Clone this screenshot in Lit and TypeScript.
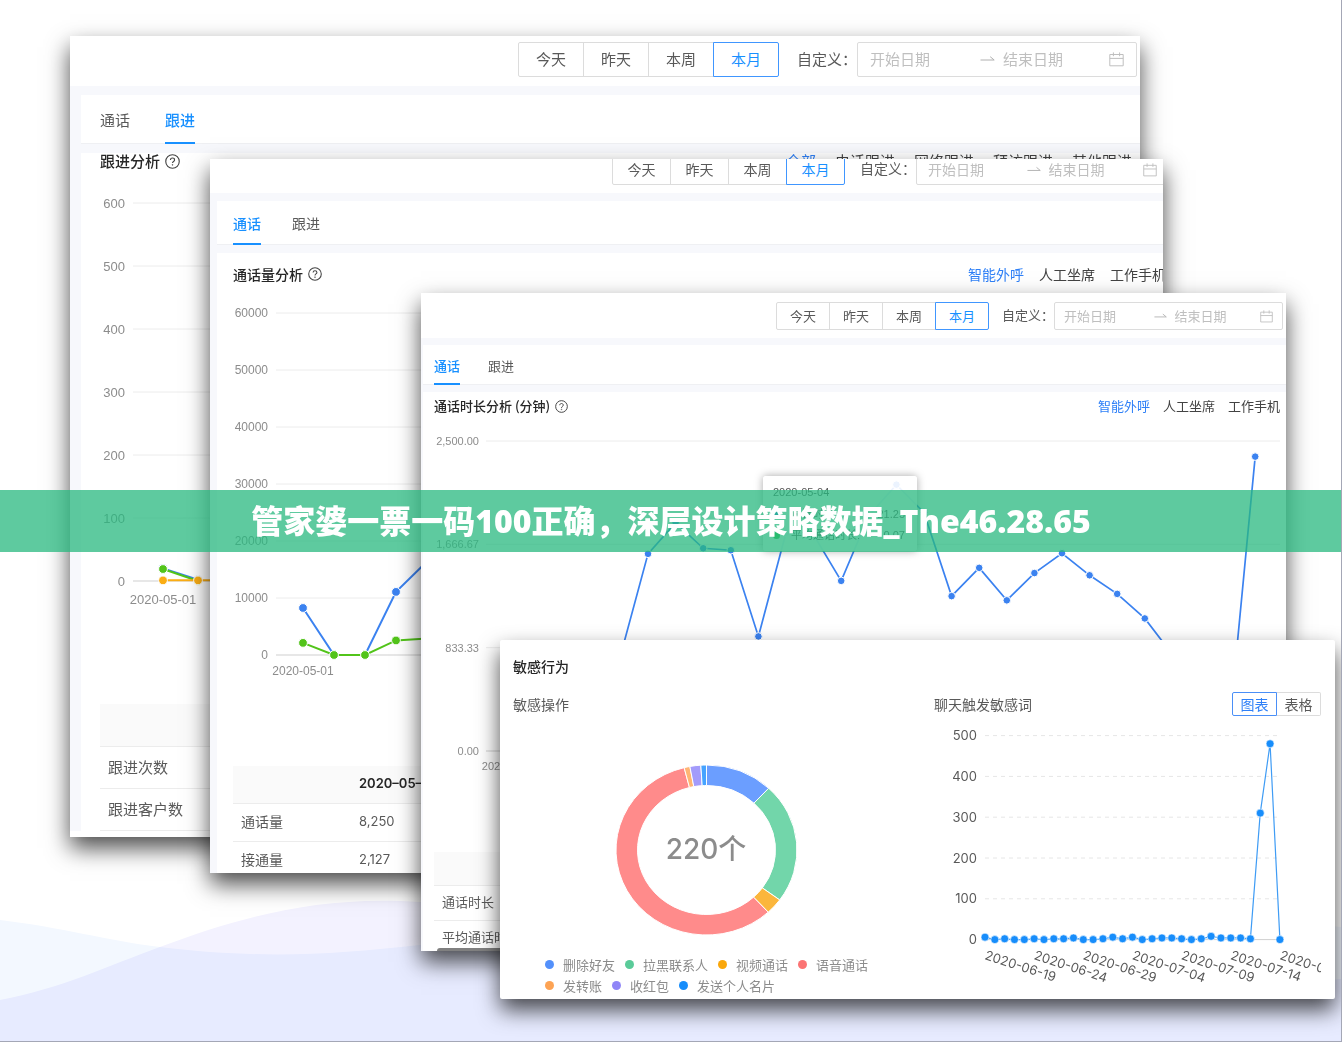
import { LitElement, html, svg, css } from "lit";
import { customElement } from "lit/decorators.js";
import { classMap } from "lit/directives/class-map.js";

interface Series {
  color: string;
  values: number[];
}

interface ChartSpec {
  width: number;
  height: number;
  plotLeft: number;
  plotRight: number;
  top: number;
  base: number;
  max: number;
  ticks: string[];
  font: number;
  labelRight: number;
  firstX: number;
  stepX: number;
  dateY: number;
  radius: number;
  series: Series[];
}

interface WindowSpec {
  id: string;
  tab: string;
  title: string;
  links: string[];
  chart: ChartSpec;
  head: string[];
  rows: string[][];
}

const WINDOWS: WindowSpec[] = [
  {
    id: "follow",
    tab: "跟进",
    title: "跟进分析",
    links: ["全部", "电话跟进", "网络跟进", "拜访跟进", "其他跟进"],
    chart: {
      width: 1059, height: 533, plotLeft: 52, plotRight: 1051, top: 32, base: 410, max: 600,
      ticks: ["0", "100", "200", "300", "400", "500", "600"],
      font: 13, labelRight: 44, firstX: 82, stepX: 35, dateY: 428, radius: 4,
      series: [
        { color: "#3b82f0", values: [20, 2] },
        { color: "#52c41a", values: [19, 0] },
        { color: "#faad14", values: [1, 1, 1] },
      ],
    },
    head: ["", ""],
    rows: [["跟进次数", ""], ["跟进客户数", ""]],
  },
  {
    id: "volume",
    tab: "通话",
    title: "通话量分析",
    links: ["智能外呼", "人工坐席", "工作手机"],
    chart: {
      width: 955, height: 469, plotLeft: 59, plotRight: 949, top: 16, base: 358, max: 60000,
      ticks: ["0", "10000", "20000", "30000", "40000", "50000", "60000"],
      font: 12, labelRight: 51, firstX: 86, stepX: 31, dateY: 374, radius: 4,
      series: [
        { color: "#3b82f0", values: [8250, 0, 0, 11070, 16400] },
        { color: "#52c41a", values: [2127, 0, 0, 2550, 2900] },
      ],
    },
    head: ["", "2020–05–01"],
    rows: [["通话量", "8,250"], ["接通量", "2,127"]],
  },
  {
    id: "duration",
    tab: "通话",
    title: "通话时长分析 (分钟)",
    links: ["智能外呼", "人工坐席", "工作手机"],
    chart: {
      width: 863, height: 430, plotLeft: 63, plotRight: 857, top: 19, base: 329, max: 2500,
      ticks: ["0.00", "833.33", "1,666.67", "2,500.00"],
      font: 11, labelRight: 56, firstX: 87, stepX: 27.6, dateY: 344, radius: 3.4,
      series: [
        {
          color: "#3b82f0",
          values: [
            620, 540, 0, 0, 766, 1590, 1841, 1635, 1619, 924, 1760, 1744, 1372, 1898, 2148, 1922,
            1249, 1477, 1215, 1435, 1595, 1417, 1267, 1069, 778, 410, 47, 2374,
          ],
        },
      ],
    },
    head: ["", ""],
    rows: [["通话时长", ""], ["平均通话时长", ""]],
  },
];

const SLICES = [
  { name: "删除好友", end: 43.4, fill: "#6b9eff", dot: "#5390fb" },
  { name: "拉黑联系人", end: 126, fill: "#72d6aa", dot: "#5acb99" },
  { name: "视频通话", end: 137, fill: "#fbb63c", dot: "#faa70b" },
  { name: "语音通话", end: 345.7, fill: "#ff8b8b", dot: "#fb7474" },
  { name: "发转账", end: 349.4, fill: "#ffb574", dot: "#fda354" },
  { name: "收红包", end: 356.4, fill: "#a39bfb", dot: "#9086f7" },
  { name: "发送个人名片", end: 360, fill: "#45a3ff", dot: "#178dfb" },
];

const WORD_HITS = [
  6, 0, 2, 0, 0, 2, 0, 2, 2, 4, 0, 0, 2, 6, 2, 6, 0, 2, 4, 4, 2, 0, 2, 8, 4, 4, 4, 2, 310, 480, 0,
];
const WORD_DATES = [
  "2020-06-19", "2020-06-24", "2020-06-29", "2020-07-04", "2020-07-09", "2020-07-14", "2020-07-19",
];

@customElement("app-root")
export class AppRoot extends LitElement {
  static styles = css`
    :host {
      display: block;
      font-family: "Noto Sans CJK SC", sans-serif;
      color: #595959;
    }
    * {
      box-sizing: border-box;
    }
    .stage {
      position: relative;
      min-height: 100vh;
      overflow: hidden;
      background: #fff;
      border-right: 1px solid #a4a7b6;
      border-bottom: 1px solid #a4a7b6;
    }
    .waves {
      position: absolute;
      left: 0;
      bottom: 0;
      width: 100%;
      height: 150px;
    }
    .wave {
      mix-blend-mode: multiply;
    }
    .window {
      position: absolute;
      overflow: hidden;
      background: #fff;
      box-shadow: 0 11px 22px rgba(0, 0, 0, 0.7);
      font-size: var(--font);
    }
    .follow {
      --font: 15px; --button-h: 35px; --button-w: 66px; --range: 280px; --gap: 18px;
      --bar: 50px; --band: 9px; --tabs: 49px; --gutter: 11px; --pad: 19px; --tab-gap: 35px;
      --head: 18px; --end: 8px; --link-gap: 19px; --icon: 15px; --row: 42px; --foot: 6px;
      --bleed: 0px; --num: 14px; --inset: 12px; --lift: 9px;
      left: 70px; right: 201px; top: 36px;
    }
    .volume {
      --font: 14px; --button-h: 31px; --button-w: 59px; --range: 253px; --gap: 15px;
      --bar: 34px; --band: 8px; --tabs: 44px; --gutter: 7px; --pad: 16px; --tab-gap: 31px;
      --head: 44px; --end: 6px; --link-gap: 15px; --icon: 14px; --row: 38px; --foot: -7px;
      --bleed: -9px; --num: 13px; --inset: 11px; --lift: 8px;
      left: 210px; right: 178px; top: 159px;
    }
    .duration {
      --font: 13px; --button-h: 28px; --button-w: 54px; --range: 229px; --gap: 13px;
      --bar: 45px; --band: 7px; --tabs: 40px; --gutter: 2px; --pad: 11px; --tab-gap: 28px;
      --head: 30px; --end: 6px; --link-gap: 13px; --icon: 13px; --row: 35px; --foot: -5px;
      --bleed: 0px; --num: 12px; --inset: 9px; --lift: 8px;
      left: 421px; right: 55px; top: 293px;
    }
    .frame {
      margin-right: var(--bleed);
      background: #f7f8fc;
    }
    .bar {
      display: flex;
      justify-content: flex-end;
      align-items: flex-end;
      height: var(--bar);
      padding: 0 3px var(--lift) 0;
      background: #fff;
    }
    button, input {
      font: inherit;
      color: inherit;
      margin: 0;
      padding: 0;
      background: none;
      border: 0;
      outline: 0;
      cursor: pointer;
    }
    .group {
      display: flex;
      margin-right: var(--gap);
    }
    .period {
      width: var(--button-w);
      height: var(--button-h);
      padding-bottom: 2px;
      border: 1px solid #dcdcdc;
      margin-right: -1px;
      background: #fff;
    }
    .period:first-child {
      border-radius: 2px 0 0 2px;
    }
    .period:last-child {
      border-radius: 0 2px 2px 0;
      margin-right: 0;
    }
    .period.on {
      position: relative;
      color: #1890ff;
      border-color: #4096ff;
    }
    .custom {
      height: var(--button-h);
      padding-bottom: 2px;
      line-height: calc(var(--button-h) - 2px);
      white-space: nowrap;
    }
    .range {
      display: flex;
      align-items: center;
      width: var(--range);
      height: var(--button-h);
      padding: 0 var(--inset);
      border: 1px solid #dcdcdc;
      border-radius: 2px;
    }
    .date {
      flex: 1;
      min-width: 0;
      width: 0;
      height: 100%;
      padding-bottom: 2px;
    }
    .date::placeholder {
      color: #bfbfbf;
      opacity: 1;
    }
    .arrow {
      width: var(--icon);
      height: var(--icon);
      margin: 0 8px 0 4px;
      fill: none;
      stroke: #b0b0b0;
    }
    .calendar {
      width: var(--icon);
      height: var(--icon);
      fill: none;
      stroke: #bfbfbf;
    }
    .tabs {
      display: flex;
      gap: var(--tab-gap);
      height: var(--tabs);
      margin: var(--band) 0 0 var(--gutter);
      padding-left: var(--pad);
      background: #fff;
      border-bottom: 1px solid #eff0f3;
    }
    .tab {
      height: var(--tabs);
      padding-top: 2px;
      border-bottom: 2px solid transparent;
    }
    .tab.on {
      font-weight: 500;
      color: #1890ff;
      border-color: #1890ff;
    }
    .content {
      margin: var(--band) 0 0 var(--gutter);
      background: #fff;
    }
    .head {
      display: flex;
      align-items: center;
      height: var(--head);
      padding: 0 var(--end) 2px var(--pad);
      line-height: 18px;
    }
    .title {
      margin: 0 5px 0 0;
      font-size: inherit;
      font-weight: 500;
      color: #262626;
    }
    .help {
      width: var(--font);
      height: var(--font);
      fill: none;
      stroke: #434343;
    }
    .links {
      display: flex;
      gap: var(--link-gap);
      margin-left: auto;
    }
    .link {
      color: #434343;
      text-decoration: none;
      white-space: nowrap;
    }
    .link.on {
      color: #2f80f7;
    }
    .chart {
      display: block;
      width: 100%;
      font-family: "Liberation Sans", sans-serif;
    }
    .chart text {
      fill: #8c8c8c;
    }
    .table {
      width: calc(100% - var(--pad));
      margin: 0 0 var(--foot) var(--pad);
      border-collapse: collapse;
      table-layout: fixed;
    }
    .table th, .table td {
      height: var(--row);
      padding: 0 8px 2px;
      text-align: left;
      font-weight: 400;
      border-bottom: 1px solid #ececec;
    }
    .table th:first-child {
      width: 118px;
    }
    .table thead th {
      height: 37px;
      background: #fafafa;
      font-family: Inter, sans-serif;
      font-size: var(--num);
      font-weight: 600;
      color: #262626;
    }
    .follow thead th {
      height: 42px;
    }
    .duration thead th {
      height: 33px;
    }
    .table td {
      font-family: Inter, sans-serif;
      font-size: var(--num);
    }
    .scrollbar {
      position: absolute;
      left: 16px;
      right: 16px;
      bottom: 0;
      height: 3px;
      border-radius: 3px 3px 0 0;
      background: #808080;
    }
    .tip {
      position: absolute;
      left: 342px;
      top: 183px;
      width: 154px;
      padding: 8px 12px 8px 10px;
      border-radius: 3px;
      background: rgba(255, 255, 255, 0.9);
      box-shadow: 0 0 8px rgba(0, 0, 0, 0.35);
      font: 11px "Liberation Sans", "Noto Sans CJK SC", sans-serif;
      line-height: 16px;
    }
    .tip-list {
      display: grid;
      gap: 5px;
      margin: 6px 0 0;
      padding: 0;
      list-style: none;
    }
    .tip-row {
      display: flex;
      align-items: center;
    }
    .tip-dot {
      width: 7px;
      height: 7px;
      margin-right: 11px;
      border-radius: 50%;
      background: #3b82f0;
    }
    .tip-dot.green {
      background: #29c441;
    }
    .tip-value {
      margin-left: auto;
    }
    .sensitive {
      left: 500px;
      right: 6px;
      top: 640px;
      padding: 14px 14px 3px 13px;
      font-size: 14px;
      line-height: 24px;
      border-radius: 2px;
    }
    .sensitive .title {
      margin-bottom: 14px;
    }
    .columns {
      display: grid;
      grid-template-columns: 421fr 387fr;
    }
    .sub {
      display: flex;
      justify-content: space-between;
      align-items: center;
      height: 24px;
    }
    .caption {
      margin: 0;
      font-size: 14px;
      font-weight: 400;
    }
    .switch {
      display: flex;
    }
    .mode {
      width: 44px;
      height: 24px;
      line-height: 20px;
      border: 1px solid #dcdcdc;
      border-left: 0;
      border-radius: 0 2px 2px 0;
    }
    .mode.on {
      width: 45px;
      color: #2f80f7;
      border: 1px solid #4a8ff7;
      border-radius: 2px 0 0 2px;
    }
    .figure {
      display: block;
      width: 100%;
      font-family: Inter, "Noto Sans CJK SC", sans-serif;
    }
    .total {
      font-size: 28px;
      font-weight: 500;
      fill: #8c8c8c;
    }
    .axis {
      font-size: 13px;
      fill: #595959;
    }
    .legend {
      display: flex;
      flex-wrap: wrap;
      column-gap: 10px;
      margin: 0;
      padding: 0 0 0 32px;
      list-style: none;
      font-size: 13px;
      line-height: 21px;
      color: #8c8c8c;
    }
    .key {
      display: flex;
      align-items: center;
      gap: 9px;
    }
    .dot {
      width: 9px;
      height: 9px;
      border-radius: 50%;
    }
    .banner {
      position: absolute;
      left: 0;
      right: -1px;
      top: 490px;
      margin: 0;
      height: 62px;
      line-height: 62px;
      text-align: center;
      white-space: nowrap;
      font-family: "Noto Sans", "Noto Sans CJK SC", sans-serif;
      font-size: 32px;
      font-weight: 900;
      color: #fff;
      background: rgba(40, 184, 127, 0.75);
    }
  `;

  private lineChart(c: ChartSpec) {
    const y = (v: number) => c.base - (v / c.max) * (c.base - c.top);
    const x = (i: number) => c.firstX + i * c.stepX;
    const gap = (c.base - c.top) / (c.ticks.length - 1);
    return html`<svg class="chart" viewBox="0 0 ${c.width} ${c.height}" font-size=${c.font}>
      ${c.ticks.map((t, i) => {
        const ty = c.base - i * gap;
        return svg`<line x1=${c.plotLeft} x2=${c.plotRight} y1=${ty} y2=${ty}
            stroke=${i ? "#ececec" : "#cfcfcf"}/>
          <text x=${c.labelRight} y=${ty + c.font * 0.36} text-anchor="end">${t}</text>`;
      })}
      <text x=${c.firstX} y=${c.dateY + c.font * 0.36} text-anchor="middle">2020-05-01</text>
      ${c.series.map(
        (s) => svg`<polyline fill="none" stroke=${s.color} stroke-width=${c.radius / 2}
            points=${s.values.map((v, i) => `${x(i)},${y(v)}`).join(" ")}/>
          ${s.values.map(
            (v, i) => svg`<circle cx=${x(i)} cy=${y(v)} r=${c.radius + 0.4}
              fill=${s.color} stroke="#fff"/>`,
          )}`,
      )}
    </svg>`;
  }

  private dataWindow(w: WindowSpec) {
    return html`<section class="window ${w.id}">
      <div class="frame">
        <div class="bar">
          <div class="group">
            ${["今天", "昨天", "本周", "本月"].map(
              (p) => html`<button class=${classMap({ period: true, on: p === "本月" })}>${p}</button>`,
            )}
          </div>
          <label class="custom" for="${w.id}-start">自定义：</label>
          <div class="range">
            <input class="date" id="${w.id}-start" placeholder="开始日期" />
            <svg class="arrow" viewBox="0 0 15 15"><path d="M0.5 8H14.2L10.2 4.7" /></svg>
            <input class="date" aria-label="结束日期" placeholder="结束日期" />
            <svg class="calendar" viewBox="0 0 15 15">
              <path d="M0.8 2.5H14.2V13.8H0.8ZM0.8 6.4H14.2M4.4 0.4V4.2M10.6 0.4V4.2" />
            </svg>
          </div>
        </div>
        <nav class="tabs">
          ${["通话", "跟进"].map(
            (t) => html`<button class=${classMap({ tab: true, on: t === w.tab })}>${t}</button>`,
          )}
        </nav>
        <div class="content">
          <div class="head">
            <h2 class="title">${w.title}</h2>
            <svg class="help" viewBox="0 0 16 16">
              <circle cx="8" cy="8" r="7.2" stroke-width="1.2" />
              <path d="M5.8 6.4C5.8 3.6 10.2 3.7 10.2 6.3C10.2 8 8 7.9 8 9.7" stroke-width="1.2" />
              <circle cx="8" cy="11.6" r="0.4" />
            </svg>
            <div class="links">
              ${w.links.map(
                (l, i) => html`<a class=${classMap({ link: true, on: i === 0 })} href="#">${l}</a>`,
              )}
            </div>
          </div>
          ${this.lineChart(w.chart)}
          <table class="table">
            <thead>
              <tr>${w.head.map((h) => html`<th scope="col">${h}</th>`)}</tr>
            </thead>
            <tbody>
              ${w.rows.map((r) => html`<tr><th scope="row">${r[0]}</th><td>${r[1]}</td></tr>`)}
            </tbody>
          </table>
        </div>
      </div>
      ${w.id === "duration"
        ? html`<div class="tip">
              2020-05-04
              <ul class="tip-list">
                <li class="tip-row"><span class="tip-dot"></span>通话时长:<span class="tip-value">21.25</span></li>
                <li class="tip-row"><span class="tip-dot green"></span>平均通话时长:<span class="tip-value">0.07</span></li>
              </ul>
            </div>
            <div class="scrollbar"></div>`
        : ""}
    </section>`;
  }

  private donut() {
    const at = (deg: number, rx: number, ry: number) => {
      const a = (deg * Math.PI) / 180;
      return `${193.5 + rx * Math.sin(a)} ${134 - ry * Math.cos(a)}`;
    };
    return html`<svg class="figure" viewBox="0 0 421 238">
      ${SLICES.map((s, i) => {
        const from = i ? SLICES[i - 1].end : 0;
        const to = Math.min(s.end, 359.99);
        const large = to - from > 180 ? 1 : 0;
        return svg`<path fill=${s.fill} stroke="#fff" d="M${at(from, 90.5, 85)}
          A90.5 85 0 ${large} 1 ${at(to, 90.5, 85)} L${at(to, 69, 64.5)}
          A69 64.5 0 ${large} 0 ${at(from, 69, 64.5)}Z"/>`;
      })}
      <text class="total" x="193" y="143" text-anchor="middle">220个</text>
    </svg>`;
  }

  private wordChart() {
    const x = (i: number) => 51 + i * 9.83;
    const y = (v: number) => 223.6 - v * 0.408;
    return html`<svg class="figure axis" viewBox="0 0 387 274">
      ${[0, 100, 200, 300, 400, 500].map(
        (v) => svg`<line x1="51" x2="346" y1=${y(v)} y2=${y(v)}
            stroke=${v ? "#e6e6e6" : "#d0d0d0"} stroke-dasharray=${v ? "4 4" : "none"}/>
          <text x="43" y=${y(v) + 4.5} text-anchor="end">${v}</text>`,
      )}
      ${WORD_DATES.map(
        (d, i) => svg`<text transform="translate(${x(i * 5) - 1} 243) rotate(18)">${d}</text>`,
      )}
      <polyline fill="none" stroke="#3f9cf5" stroke-width="1.2"
        points=${WORD_HITS.map((v, i) => `${x(i)},${y(v)}`).join(" ")} />
      ${WORD_HITS.map(
        (v, i) => svg`<circle cx=${x(i)} cy=${y(v)} r="4" fill="#178dfb" stroke="#fff" stroke-width="0.6"/>`,
      )}
    </svg>`;
  }

  render() {
    return html`<main class="stage">
      <svg class="waves" viewBox="0 0 1342 150" preserveAspectRatio="none">
        <path class="wave" fill="#f3f8ff"
          d="M0 29C60 36 110 50 160 56C260 68 330 64 420 54C700 20 1000 0 1342 36V150H0Z" />
        <path class="wave" fill="#f3f2ff"
          d="M0 109C60 98 110 74 160 56C240 26 320 4 420 11C700 30 1000 120 1342 88V150H0Z" />
      </svg>
      ${WINDOWS.map((w) => this.dataWindow(w))}
      <section class="window sensitive">
        <h2 class="title">敏感行为</h2>
        <div class="columns">
          <div>
            <div class="sub"><h3 class="caption">敏感操作</h3></div>
            ${this.donut()}
            <ul class="legend">
              ${SLICES.map(
                (s) => html`<li class="key">
                  <span class="dot" style="background:${s.dot}"></span>${s.name}
                </li>`,
              )}
            </ul>
          </div>
          <div>
            <div class="sub">
              <h3 class="caption">聊天触发敏感词</h3>
              <div class="switch">
                <button class="mode on">图表</button>
                <button class="mode">表格</button>
              </div>
            </div>
            ${this.wordChart()}
          </div>
        </div>
      </section>
      <h1 class="banner">管家婆一票一码100正确，深层设计策略数据_The46.28.65</h1>
    </main>`;
  }
}
